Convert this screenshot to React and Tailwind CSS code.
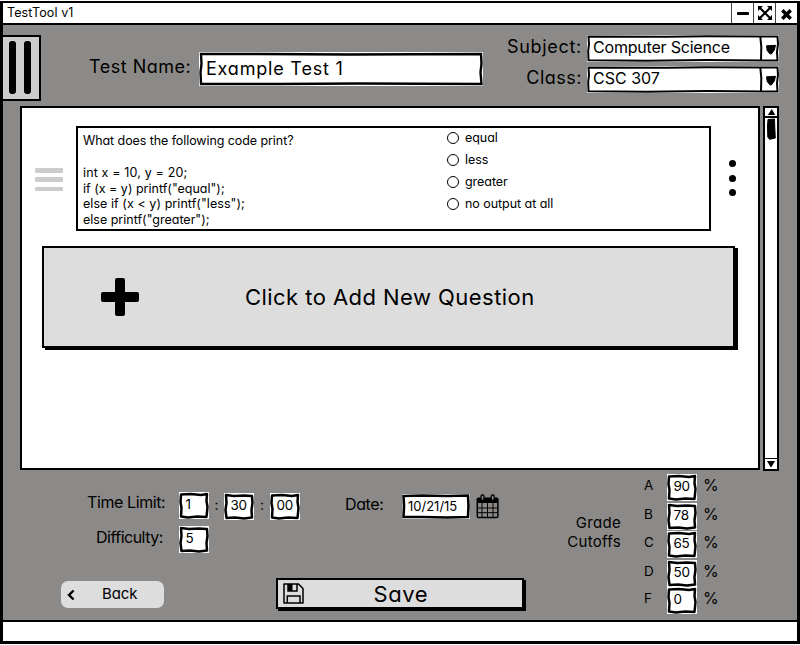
import React from "react";

const BOX_FRAMES = [
  "M2 2.5 L12 2 L22 3 L28 2 L27.5 9 L28.5 15 L27.5 25 L18 24.5 L9 25.5 L2 24.5 L2.5 16 L1.5 10 Z",
  "M2 2 L10 3 L20 2.5 L28 3 L28.5 10 L27.5 17 L28 24.5 L20 25.5 L11 24.5 L2.5 25 L1.5 17 L2.5 10 Z",
];

function NumberBox({ value, variant = 0, className = "" }) {
  return (
    <div className={`relative h-[27px] w-[30px] shrink-0 bg-white ${className}`}>
      <svg className="absolute inset-0" width="30" height="27" viewBox="0 0 30 27">
        <path d={BOX_FRAMES[variant]} fill="none" stroke="#000" strokeWidth="2.5" strokeLinejoin="round" />
      </svg>
      <span className="relative block pl-[6.5px] text-[13.5px] leading-[25px] tracking-[-0.3px]">{value}</span>
    </div>
  );
}

function Select({ value, className = "" }) {
  return (
    <div className="relative flex h-[27px] w-[192px] bg-white">
      <svg className="absolute inset-0" width="192" height="27" viewBox="0 0 192 27" fill="none" stroke="#000" strokeWidth="2">
        <path d="M1.5 1.5 L80 1.8 L120 1.2 L190.5 1.5 L191 9 L190 17 L190.5 25.5 L120 25 L60 25.8 L1.5 25.3 L1.2 16 L2 9 Z" />
        <path d="M173.3 1.5 L174.3 12 L174 25.5" />
      </svg>
      <span className={`relative w-[175px] whitespace-nowrap pl-[6px] text-[16px] leading-[24px] ${className}`}>{value}</span>
      <span className="relative flex flex-1 items-center justify-center pl-px">
        <svg width="12" height="12" viewBox="0 0 12 12">
          <path d="M1.5 2.8 L10.5 2.3 L9.3 7 L6.3 11 L4.8 10.8 L2.2 7.5 Z" stroke="#000" strokeLinejoin="round" />
        </svg>
      </span>
    </div>
  );
}

function TitleBar() {
  return (
    <div className="flex h-[22px] shrink-0 border-b-2 border-black bg-white">
      <span className="ml-[4px] flex-1 text-[12.5px] leading-[19px] tracking-[0.1px]">TestTool v1</span>
      <span className="flex w-[22px] items-center justify-center border-l border-[#444]">
        <svg width="14" height="5" viewBox="0 0 14 5"><rect x="1" y="1" width="12" height="3" rx="0.8" /></svg>
      </span>
      <span className="flex w-[22px] items-center justify-center border-l border-[#444]">
        <svg width="16" height="16" viewBox="0 0 16 16">
          <path d="M3 3 L13 13 M13 3 L3 13" stroke="#000" strokeWidth="2" />
          <path d="M1 1 H6 L1 6 Z M15 1 V6 L10 1 Z M1 15 V10 L6 15 Z M15 15 H10 L15 10 Z" />
        </svg>
      </span>
      <span className="flex w-[22px] items-center justify-center border-l border-[#444] pt-[3px]">
        <svg width="13" height="13" viewBox="0 0 13 13">
          <path d="M2.3 2.3 L10.7 10.7 M10.7 2.3 L2.3 10.7" stroke="#000" strokeWidth="3.5" />
        </svg>
      </span>
    </div>
  );
}

function Header() {
  return (
    <div className="flex h-[81px] shrink-0 items-start">
      <div className="mt-[10px] flex h-[66px] w-[38px] gap-[8px] border-y-2 border-r-2 border-black bg-[#cdcdcd] pl-[6px] pt-[4px]">
        <span className="h-[53px] w-[7px] rounded-[3px] bg-black" />
        <span className="h-[53px] w-[7px] rounded-[3px] bg-black" />
      </div>
      <span className="ml-[48px] mt-[30px] w-[110px] whitespace-nowrap text-[18px] leading-[24px] tracking-[0.5px]">Test Name:</span>
      <div className="relative mt-[27px] h-[34px] w-[284px] bg-white">
        <svg className="absolute inset-0" width="284" height="34" viewBox="0 0 284 34">
          <path d="M2 2 L60 2 L150 2.5 L282 2 L282.5 12 L281.5 20 L282.5 32 L160 31.5 L80 32 L2 32 L1.5 20 L2.5 12 Z" fill="none" stroke="#000" strokeWidth="2.4" />
        </svg>
        <span className="relative block pl-[7px] text-[18px] leading-[33px] tracking-[0.8px]">Example Test 1</span>
      </div>
      <div className="ml-[21px] flex w-[78px] flex-col items-end pt-[10px] text-[18px]">
        <span className="h-[31px] leading-[24px] tracking-[0.7px]">Subject:</span>
        <span className="h-[31px] leading-[24px] tracking-[0.5px]">Class:</span>
      </div>
      <div className="ml-[5px] mt-[10px] flex flex-col gap-[4px]">
        <Select value="Computer Science" className="tracking-[-0.2px]" />
        <Select value="CSC 307" />
      </div>
    </div>
  );
}

const CHOICES = ["equal", "less", "greater", "no output at all"];

function QuestionCard() {
  return (
    <div className="flex h-[105px] items-start">
      <div className="ml-[13px] mt-[42px] flex w-[41px] flex-col gap-[4.5px]">
        <span className="h-[4.8px] w-[28px] rounded-[1px] bg-[#ccc]" />
        <span className="h-[4.8px] w-[28px] rounded-[1px] bg-[#ccc]" />
        <span className="h-[4.8px] w-[28px] rounded-[1px] bg-[#ccc]" />
      </div>
      <div className="flex h-[105px] w-[635px] border-2 border-black bg-white">
        <div className="w-[369px] whitespace-pre pl-[5px] pt-[5px] text-[12.5px] leading-[15.5px]">
          <p className="h-[32px] tracking-[-0.08px]">What does the following code print?</p>
          <p className="tracking-[0.15px]">int x = 10, y = 20;</p>
          <p>{'if (x = y) printf("equal");'}</p>
          <p className="tracking-[0.06px]">{'else if (x < y) printf("less");'}</p>
          <p>{'else printf("greater");'}</p>
        </div>
        <ul className="-mt-px text-[12.5px] leading-[22px]">
          {CHOICES.map((c) => (
            <li key={c} className="flex items-center gap-[6px] tracking-[-0.05px]">
              <span className="h-[12px] w-[12px] rounded-full border-[1.5px] border-black bg-white" />
              {c}
            </li>
          ))}
        </ul>
      </div>
      <div className="ml-[18px] mt-[34px] flex flex-col gap-[7.5px]">
        <span className="h-[7px] w-[7px] rounded-full bg-black" />
        <span className="h-[7px] w-[7px] rounded-full bg-black" />
        <span className="h-[7px] w-[7px] rounded-full bg-black" />
      </div>
    </div>
  );
}

function AddButton() {
  return (
    <div className="ml-[20px] mt-[15px] flex h-[102px] w-[693px] items-center border-2 border-black bg-[#ddd] shadow-[3px_2px_0_#000]">
      <svg className="ml-[57px]" width="38" height="38" viewBox="0 0 38 38">
        <rect x="14" y="0" width="10" height="38" rx="2" />
        <rect x="0" y="14" width="38" height="10" rx="2" />
      </svg>
      <span className="ml-[106px] whitespace-nowrap text-[22px] tracking-[0.45px]">Click to Add New Question</span>
    </div>
  );
}

function ScrollBar() {
  return (
    <div className="ml-[3px] flex h-[365px] w-[16px] flex-col border-2 border-black bg-white">
      <span className="flex h-[10px] items-center justify-center border-b-2 border-black">
        <svg width="9" height="8" viewBox="0 0 9 8"><path d="M4.8 1 L8.2 7 L0.8 7 Z" /></svg>
      </span>
      <svg className="ml-[2px]" width="9" height="22" viewBox="0 0 9 22">
        <path d="M1 1.5 L7.5 1 L7.8 10 L8.3 20 L2.5 21.3 L0.8 19 L0.5 8 Z" stroke="#000" strokeLinejoin="round" />
      </svg>
      <span className="flex-1" />
      <span className="flex h-[11px] items-center justify-center border-t-[1.5px] border-black">
        <svg width="10" height="8" viewBox="0 0 10 8"><path d="M1 1 L9 1 L5.5 7 L4.5 7 Z" /></svg>
      </span>
    </div>
  );
}

function CalendarIcon() {
  return (
    <svg className="ml-[6px] mt-[23px]" width="23" height="25" viewBox="0 0 23 25" fill="none" stroke="#000">
      <rect x="1.3" y="4.2" width="20.6" height="19.4" rx="1" strokeWidth="1.5" />
      <rect x="1.3" y="4" width="20.6" height="5" fill="#000" stroke="none" />
      <path d="M6 9 V23.5 M11.5 9 V23.5 M17 9 V23.5 M1.3 14 H22 M1.3 18.7 H22" strokeWidth="1" />
      <rect x="5" y="1" width="3" height="5.5" rx="1.4" fill="#8c8a88" strokeWidth="1.3" />
      <rect x="15.2" y="1" width="3" height="5.5" rx="1.4" fill="#8c8a88" strokeWidth="1.3" />
    </svg>
  );
}

function SaveIcon() {
  return (
    <svg className="ml-[4.5px]" width="21" height="21" viewBox="0 0 21 21" fill="none" stroke="#000" strokeWidth="1.5">
      <path d="M1 1 H15.5 L20 5.5 V20 H1 Z" strokeLinejoin="round" />
      <path d="M5 1 V8 H14 V1" />
      <rect x="5" y="1" width="4.5" height="7" fill="#000" stroke="none" />
      <path d="M4.3 20 V13 H17 V20" />
    </svg>
  );
}

const GRADES = [
  ["A", "90"],
  ["B", "78"],
  ["C", "65"],
  ["D", "50"],
  ["F", "0"],
];

function Footer() {
  return (
    <div className="flex h-[149px] shrink-0">
      <div className="flex w-[550px] flex-col">
        <div className="flex h-[55px] items-start whitespace-nowrap">
          <span className="ml-[84px] mt-[20px] w-[92px] text-[16px] leading-[22px] tracking-[-0.4px]">Time Limit:</span>
          <NumberBox value="1" className="mt-[21px]" />
          <span className="mt-[24px] w-[15px] text-center text-[14px] leading-[20px]">:</span>
          <NumberBox value="30" variant={1} className="mt-[22px]" />
          <span className="mt-[24px] w-[16px] text-center text-[14px] leading-[20px]">:</span>
          <NumberBox value="00" className="mt-[22px]" />
          <span className="ml-[45px] mt-[22px] w-[57px] text-[16px] leading-[22px] tracking-[-0.4px]">Date:</span>
          <div className="relative mt-[23px] h-[25px] w-[68px] bg-white">
            <svg className="absolute inset-0" width="68" height="25" viewBox="0 0 68 25">
              <path d="M1.5 2 L20 1.5 L45 2 L66 1.5 L66.5 12 L66 23 L45 23.5 L20 23 L1.5 23 L2 12 Z" fill="none" stroke="#000" strokeWidth="2.6" />
            </svg>
            <span className="relative block pl-[6px] text-[13px] leading-[25px]">10/21/15</span>
          </div>
          <CalendarIcon />
        </div>
        <div className="flex h-[51px] items-start">
          <span className="ml-[93px] w-[83px] text-[16px] leading-[22px] tracking-[-0.5px]">Difficulty:</span>
          <NumberBox value="5" variant={1} />
        </div>
        <div className="flex items-start">
          <div className="ml-[58px] mt-[4px] flex h-[27px] w-[103px] items-center rounded-[7px] bg-[#ddd]">
            <svg className="ml-[6px]" width="8" height="12" viewBox="0 0 8 12" fill="none" stroke="#000" strokeWidth="2.4">
              <path d="M6.6 1.5 L2 6 L6.6 10.5" />
            </svg>
            <span className="-mt-[2px] ml-[27px] text-[15px] leading-[24px] tracking-[-0.1px]">Back</span>
          </div>
          <div className="ml-[112px] mt-px flex h-[31px] w-[248px] items-center border-2 border-black bg-[#ddd] shadow-[2px_2px_0_#000]">
            <SaveIcon />
            <span className="ml-[70px] text-[22px] leading-[28px] tracking-[0.6px]">Save</span>
          </div>
        </div>
      </div>
      <div className="ml-[9px] mt-[42px] w-[59px] text-right text-[15px] leading-[19px] tracking-[0.3px]">
        Grade
        <br />
        Cutoffs
      </div>
      <div className="ml-[23px] mt-[3px] flex flex-col">
        {GRADES.map(([letter, cutoff], i) => (
          <div key={letter} className={i < 3 ? "flex h-[28.7px] items-start" : "flex h-[27.2px] items-start"}>
            <span className="w-[23px] text-[13.5px] leading-[22px]">{letter}</span>
            <NumberBox value={cutoff} variant={i % 2} />
            <span className="ml-[6px] text-[16px] leading-[22px]">%</span>
          </div>
        ))}
      </div>
    </div>
  );
}

export default function App() {
  return (
    <div className="h-[645px] w-[800px] overflow-hidden bg-white pt-px font-['Inter','Liberation_Sans',sans-serif] text-black [font-feature-settings:'cv11','calt'_0]">
      <div className="flex h-[643px] flex-col border-x-[3px] border-b-[3px] border-t-2 border-black bg-[#8c8a88]">
        <TitleBar />
        <Header />
        <div className="flex h-[365px] shrink-0 pl-[17px]">
          <div className="h-[364px] w-[740px] border-2 border-black bg-white pt-[18px]">
            <QuestionCard />
            <AddButton />
          </div>
          <ScrollBar />
        </div>
        <Footer />
        <div className="flex-1 border-t-2 border-black bg-white" />
      </div>
    </div>
  );
}
